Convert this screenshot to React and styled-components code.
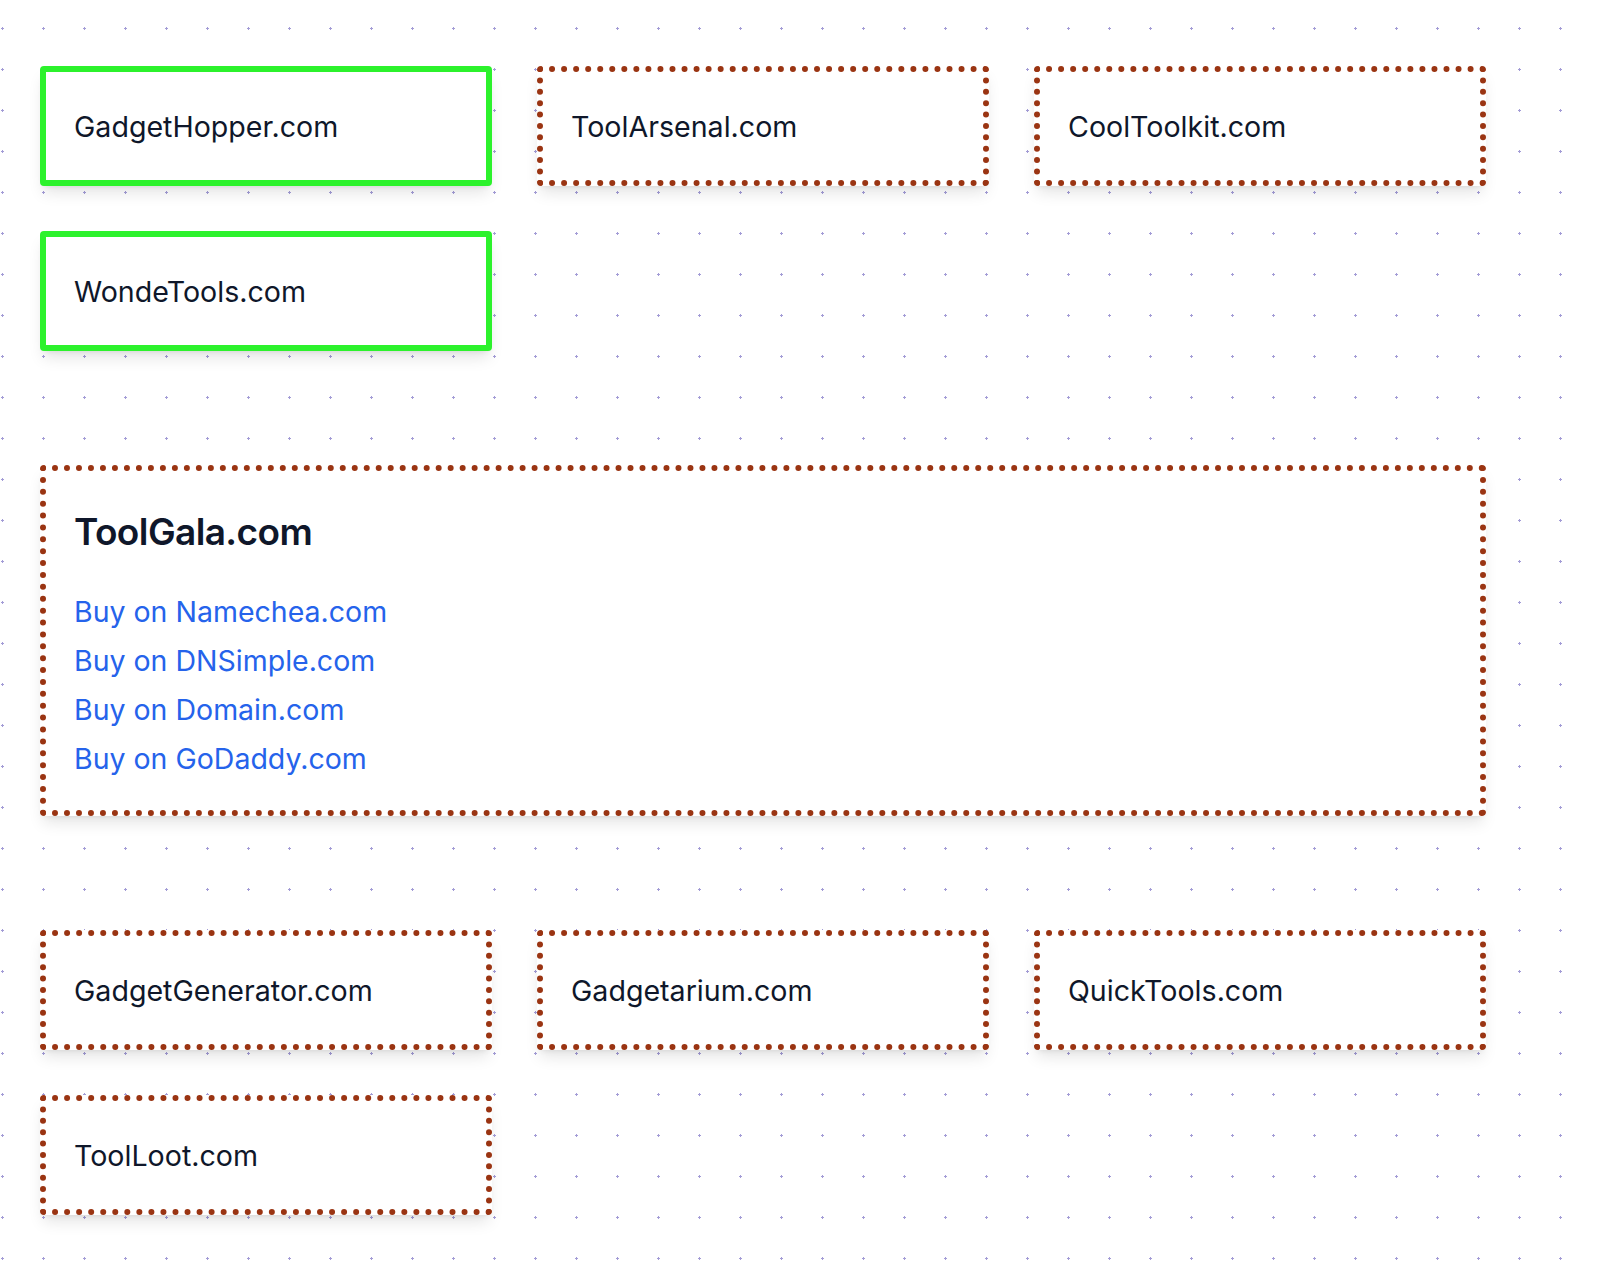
import React from "react";
import styled, { createGlobalStyle } from "styled-components";

const GlobalStyle = createGlobalStyle`
  html, body {
    margin: 0;
    padding: 0;
    background-color: #ffffff;
    font-family: "Inter", "Noto Sans", sans-serif;
    color: #0f172a;
  }
`;

const Page = styled.div`
  min-height: 1261px;
  box-sizing: border-box;
  padding: 66px 0 40px 40px;
  background-color: #ffffff;
  background-image: radial-gradient(circle, #a39cd6 1px, transparent 1.3px);
  background-size: 41px 41px;
  background-position: -18px 8px;
  display: flex;
  flex-direction: column;
  gap: 114px;
`;

const Section = styled.section`
  width: 1446px;
  display: grid;
  grid-template-columns: repeat(3, 1fr);
  gap: 45px;
`;

const Card = styled.div`
  box-sizing: border-box;
  height: 120px;
  padding: 0 28px;
  display: flex;
  align-items: center;
  background: #ffffff;
  border-radius: 4px;
  border: 6px ${(p) => (p.$taken ? "solid #2cf22c" : "dotted #9a3412")};
  box-shadow: 0 10px 15px -3px rgba(0, 0, 0, 0.1),
    0 4px 6px -4px rgba(0, 0, 0, 0.1);
  font-size: 28.6px;
`;

const Detail = styled.div`
  grid-column: 1 / -1;
  box-sizing: border-box;
  height: 351px;
  padding: 30px 28px;
  background: #ffffff;
  border-radius: 4px;
  border: 6px dotted #9a3412;
  box-shadow: 0 10px 15px -3px rgba(0, 0, 0, 0.1),
    0 4px 6px -4px rgba(0, 0, 0, 0.1);
`;

const Title = styled.h2`
  margin: 9px 0 33px;
  font-size: 37px;
  font-weight: 600;
  letter-spacing: -0.6px;
  line-height: 44px;
`;

const Links = styled.div`
  display: flex;
  flex-direction: column;
`;

const Link = styled.a`
  color: #2563eb;
  text-decoration: none;
  font-size: 28.5px;
  line-height: 49px;
  cursor: pointer;
`;

const top = [
  { name: "GadgetHopper.com", taken: true },
  { name: "ToolArsenal.com" },
  { name: "CoolToolkit.com" },
  { name: "WondeTools.com", taken: true },
];

const bottom = [
  { name: "GadgetGenerator.com" },
  { name: "Gadgetarium.com" },
  { name: "QuickTools.com" },
  { name: "ToolLoot.com" },
];

const registrars = ["Namechea.com", "DNSimple.com", "Domain.com", "GoDaddy.com"];

export default function App() {
  return (
    <>
      <GlobalStyle />
      <Page>
        <Section>
          {top.map((d) => (
            <Card key={d.name} $taken={d.taken}>
              {d.name}
            </Card>
          ))}
        </Section>
        <Section>
          <Detail>
            <Title>ToolGala.com</Title>
            <Links>
              {registrars.map((r) => (
                <Link key={r}>Buy on {r}</Link>
              ))}
            </Links>
          </Detail>
        </Section>
        <Section>
          {bottom.map((d) => (
            <Card key={d.name}>{d.name}</Card>
          ))}
        </Section>
      </Page>
    </>
  );
}
